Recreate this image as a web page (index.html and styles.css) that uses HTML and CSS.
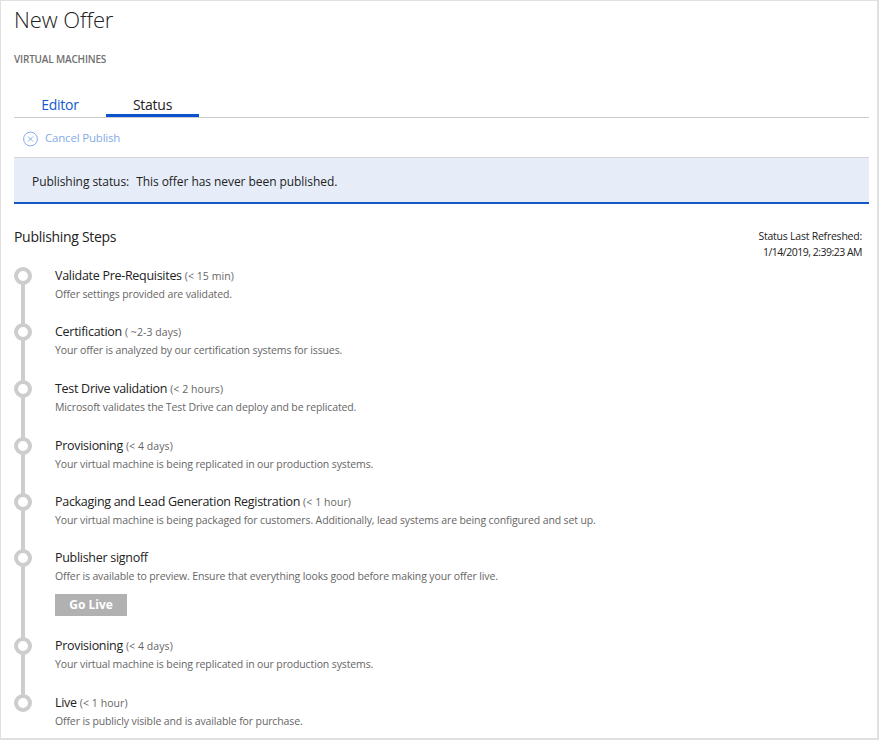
FILE: index.html
```html
<!DOCTYPE html>
<html lang="en">
<head>
<meta charset="utf-8">
<title>New Offer</title>
<link rel="stylesheet" href="styles.css">
</head>
<body>
<main class="page">
  <h1 class="title">New Offer</h1>
  <div class="category">VIRTUAL MACHINES</div>
  <nav class="tabs">
    <a class="tab">Editor</a>
    <a class="tab active">Status</a>
  </nav>
  <div class="toolbar">
    <svg class="cancel-icon" viewBox="0 0 16 16" width="16" height="16" fill="none" stroke="currentColor"><circle cx="7.5" cy="8" r="6.9"/><path d="M5 5.5l5 5M10 5.5l-5 5"/></svg>
    <span class="cancel">Cancel Publish</span>
  </div>
  <div class="banner"><span>Publishing status:</span><span>This offer has never been published.</span></div>
  <header class="steps-head">
    <h2 class="steps-title">Publishing Steps</h2>
    <div class="refreshed"><div class="label">Status Last Refreshed:</div><div class="time">1/14/2019, 2:39:23 AM</div></div>
  </header>
  <ol class="steps">
    <li class="step short"><i class="node"></i><div><div class="name">Validate Pre-Requisites <small>(&lt; 15 min)</small></div><p class="desc">Offer settings provided are validated.</p></div></li>
    <li class="step"><i class="node"></i><div><div class="name">Certification <small>( ~2-3 days)</small></div><p class="desc">Your offer is analyzed by our certification systems for issues.</p></div></li>
    <li class="step"><i class="node"></i><div><div class="name">Test Drive validation <small>(&lt; 2 hours)</small></div><p class="desc">Microsoft validates the Test Drive can deploy and be replicated.</p></div></li>
    <li class="step short"><i class="node"></i><div><div class="name">Provisioning <small>(&lt; 4 days)</small></div><p class="desc">Your virtual machine is being replicated in our production systems.</p></div></li>
    <li class="step short"><i class="node"></i><div><div class="name">Packaging and Lead Generation Registration <small>(&lt; 1 hour)</small></div><p class="desc">Your virtual machine is being packaged for customers. Additionally, lead systems are being configured and set up.</p></div></li>
    <li class="step tall"><i class="node"></i><div><div class="name">Publisher signoff</div><p class="desc">Offer is available to preview. Ensure that everything looks good before making your offer live.</p><button class="go">Go Live</button></div></li>
    <li class="step"><i class="node"></i><div><div class="name">Provisioning <small>(&lt; 4 days)</small></div><p class="desc">Your virtual machine is being replicated in our production systems.</p></div></li>
    <li class="step"><i class="node"></i><div><div class="name">Live <small>(&lt; 1 hour)</small></div><p class="desc">Offer is publicly visible and is available for purchase.</p></div></li>
  </ol>
</main>
</body>
</html>
```
FILE: styles.css
```css
* { box-sizing: border-box; }
body { margin: 0; background: #fff; color: #222; font-family: "Open Sans", "Noto Sans", sans-serif; }
.page { width: 879px; height: 740px; padding: 0 8px 0 13px; border: solid #e0e0e0; border-width: 1px 2px 2px 1px; overflow: hidden; white-space: nowrap; }
.title { margin: 3px 0 0; font-size: 22px; line-height: 30px; font-weight: 300; letter-spacing: -0.1px; color: #222; }
.category { margin-top: 17px; font-size: 10px; line-height: 16px; font-weight: 600; letter-spacing: -0.18px; color: #707070; }
.tabs { display: flex; height: 51px; padding-top: 25px; border-bottom: 1px solid #ccc; }
.tab { width: 92px; height: 25px; text-align: center; font-size: 14px; line-height: 26px; letter-spacing: -0.25px; color: #0f5bd0; }
.tab.active { width: 93px; color: #222; border-bottom: 3px solid #0b53ce; }
.toolbar { display: flex; align-items: center; gap: 6px; height: 39px; padding: 2px 0 0 9px; color: #86abe8; }
.cancel { font-size: 11.5px; line-height: 18px; letter-spacing: -0.19px; margin-top: -1px; }
.banner { display: flex; gap: 7px; height: 47px; padding-left: 18px; border-top: 1px solid #d6d6d6; border-bottom: 2px solid #1457c4; background: #e6edf9; font-size: 12px; line-height: 48px; letter-spacing: -0.06px; }
.steps-head { display: flex; justify-content: space-between; height: 63px; padding: 23px 7px 0 0; }
.steps-title { margin: 0; font-size: 14px; line-height: 20px; font-weight: 400; letter-spacing: -0.3px; }
.refreshed { padding-top: 1px; text-align: right; font-size: 10.5px; line-height: 16px; letter-spacing: -0.23px; }
.time { letter-spacing: -0.5px; }
.steps { margin: 0; padding: 0; list-style: none; }
.step { position: relative; display: flex; gap: 23px; height: 57px; }
.step.short { height: 56px; }
.step.tall { height: 88px; }
.step:not(:last-child)::before { content: ""; position: absolute; left: 7px; top: 17px; bottom: -1px; width: 4px; background: #cdcdcd; }
.node { width: 18px; height: 18px; border: 4px solid #cdcdcd; border-radius: 50%; background: #fff; }
.name { font-size: 12.5px; line-height: 18px; letter-spacing: -0.29px; }
.name small { font-size: 10.5px; letter-spacing: 0.07px; color: #666; }
.desc { margin: 0; font-size: 10.5px; line-height: 18px; letter-spacing: -0.125px; color: #666; }
.go { display: block; width: 72px; height: 22px; margin-top: 9px; padding: 0; border: 0; background: #b1b1b1; color: #fff; font: 700 12px/22px "Open Sans", sans-serif; }
```
